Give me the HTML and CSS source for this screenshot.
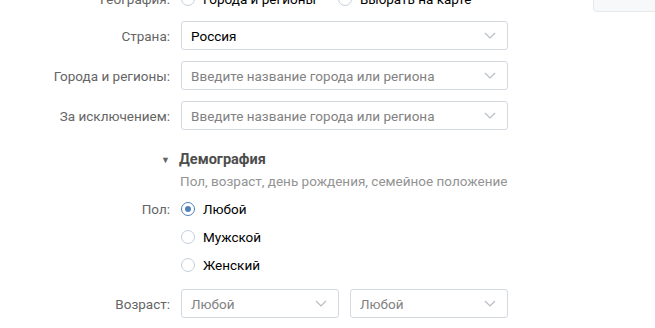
FILE: index.html
```html
<!DOCTYPE html>
<html lang="ru">
<head>
    <meta charset="UTF-8">
    <title>Аудитория</title>
    <link rel="stylesheet" href="styles.css">
</head>
<body>
    <div class="side-box"></div>

    <div class="form">
        <!-- География -->
        <div class="row row-top">
            <div class="label">География:</div>
            <div class="radios-inline">
                <label class="radio"><span class="radio-circle"></span>Города и регионы</label>
                <label class="radio radio-second"><span class="radio-circle"></span>Выбрать на карте</label>
            </div>
        </div>

        <div class="row row-field">
            <div class="label">Страна:</div>
            <div class="select select-wide">
                <span class="value">Россия</span>
                <svg class="chevron" width="12" height="7" viewBox="0 0 12 7"><path d="M1 1l5 5 5-5" fill="none" stroke="#b5bcc4" stroke-width="1.2"/></svg>
            </div>
        </div>

        <div class="row row-field">
            <div class="label">Города и регионы:</div>
            <div class="select select-wide">
                <span class="placeholder">Введите название города или региона</span>
                <svg class="chevron" width="12" height="7" viewBox="0 0 12 7"><path d="M1 1l5 5 5-5" fill="none" stroke="#b5bcc4" stroke-width="1.2"/></svg>
            </div>
        </div>

        <div class="row row-field">
            <div class="label">За исключением:</div>
            <div class="select select-wide">
                <span class="placeholder">Введите название города или региона</span>
                <svg class="chevron" width="12" height="7" viewBox="0 0 12 7"><path d="M1 1l5 5 5-5" fill="none" stroke="#b5bcc4" stroke-width="1.2"/></svg>
            </div>
        </div>

        <!-- Демография -->
        <div class="section">
            <div class="section-title"><span class="arrow">&#9660;</span>Демография</div>
            <div class="section-description">Пол, возраст, день рождения, семейное положение</div>
        </div>

        <div class="row row-radio row-first-radio">
            <div class="label">Пол:</div>
            <label class="radio"><span class="radio-circle checked"></span>Любой</label>
        </div>
        <div class="row row-radio">
            <div class="label"></div>
            <label class="radio"><span class="radio-circle"></span>Мужской</label>
        </div>
        <div class="row row-radio">
            <div class="label"></div>
            <label class="radio"><span class="radio-circle"></span>Женский</label>
        </div>

        <div class="row row-age">
            <div class="label">Возраст:</div>
            <div class="age-selects">
                <div class="select select-half">
                    <span class="placeholder">Любой</span>
                    <svg class="chevron" width="12" height="7" viewBox="0 0 12 7"><path d="M1 1l5 5 5-5" fill="none" stroke="#b5bcc4" stroke-width="1.2"/></svg>
                </div>
                <div class="select select-half">
                    <span class="placeholder">Любой</span>
                    <svg class="chevron" width="12" height="7" viewBox="0 0 12 7"><path d="M1 1l5 5 5-5" fill="none" stroke="#b5bcc4" stroke-width="1.2"/></svg>
                </div>
            </div>
        </div>
    </div>
</body>
</html>
```

FILE: styles.css
```css
/* General Styles */
body {
    font-family: Roboto, 'Open Sans', sans-serif;
    font-size: 13.5px;
    color: #000;
    background: #fff;
    margin: 0;
    padding: 0;
    overflow: hidden;
}

.side-box {
    position: absolute;
    top: -10px;
    right: -10px;
    width: 70px;
    height: 20px;
    background: #f7f8fa;
    border: 1px solid #e7e8ec;
    border-radius: 4px;
}

.form {
    width: 508px;
    margin-top: -11px;
}

.row {
    display: flex;
    align-items: center;
}

.label {
    width: 181px;
    flex-shrink: 0;
    box-sizing: border-box;
    padding-right: 11px;
    text-align: right;
    color: #656565;
}

.row-top {
    height: 20px;
}

.row-field {
    margin-top: 11px;
}

.row-top + .row-field {
    margin-top: 12px;
}

/* Selects */
.select {
    box-sizing: border-box;
    height: 29px;
    border: 1px solid #d3d9de;
    border-radius: 3px;
    background: #fff;
    display: flex;
    align-items: center;
    justify-content: space-between;
    padding: 0 11px 0 9px;
}

.select-wide {
    width: 327px;
}

.select-half {
    width: 158px;
}

.value {
    color: #000;
}

.placeholder {
    color: #828282;
}

.chevron {
    display: block;
}

/* Radios */
.radios-inline {
    display: flex;
    align-items: center;
}

.radio {
    display: flex;
    align-items: center;
    height: 20px;
    color: #000;
}

.radio-second {
    margin-left: 22px;
}

.radio-circle {
    box-sizing: border-box;
    width: 14px;
    height: 14px;
    border: 1px solid #c5d0db;
    border-radius: 50%;
    margin-right: 8px;
    position: relative;
    background: #fff;
}

.radio-circle.checked {
    border-color: #5181b8;
}

.radio-circle.checked::after {
    content: '';
    position: absolute;
    left: 3px;
    top: 3px;
    width: 6px;
    height: 6px;
    border-radius: 50%;
    background: #5181b8;
}

.row-radio {
    margin-top: 8px;
}

.row-first-radio {
    margin-top: 9px;
}

/* Section */
.section {
    margin-top: 21px;
    padding-left: 179px;
}

.section-title {
    position: relative;
    height: 18px;
    line-height: 18px;
    font-size: 14.5px;
    font-weight: 700;
    color: #4d4d4d;
}

.arrow {
    position: absolute;
    left: -18px;
    top: 0;
    font-size: 9px;
    color: #656565;
}

.section-description {
    margin-top: 3px;
    padding-left: 1px;
    height: 18px;
    line-height: 18px;
    color: #939393;
}

.row-age {
    margin-top: 14px;
}

.age-selects {
    display: flex;
    gap: 11px;
}
```
